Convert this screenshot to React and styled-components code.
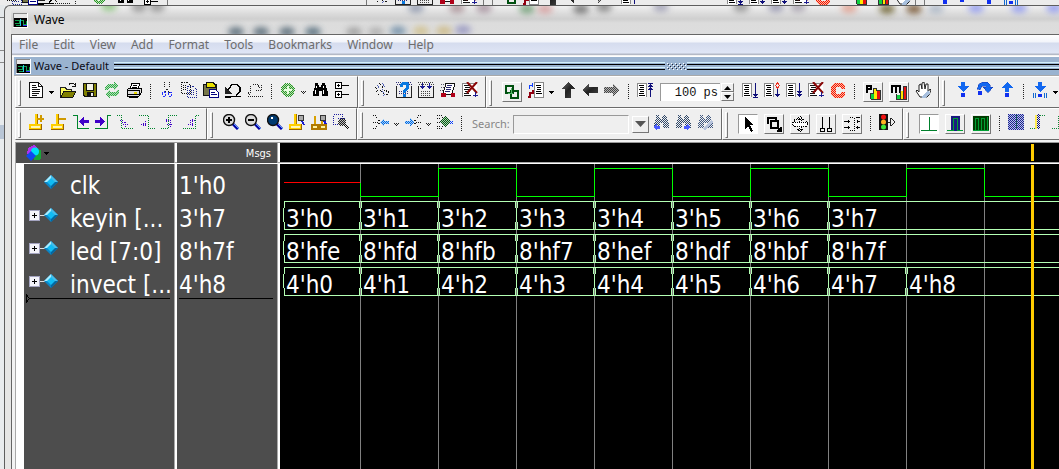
import React from "react";
import styled, { createGlobalStyle, css } from "styled-components";

const ui = `"Noto Sans", "Open Sans", sans-serif`;
const tahoma = `"DejaVu Sans Condensed", "DejaVu Sans", sans-serif`;

const Global = createGlobalStyle`
  * { box-sizing: border-box; }
  body { margin: 0; background: #e9ecee; font-family: ${ui}; }
  button, input { font: inherit; border: 0; padding: 0; margin: 0; background: none; border-radius: 0; }
`;

/* ---------- frame ---------- */
const Desktop = styled.div`
  display: flex;
  flex-direction: column;
  min-height: 100vh;
  overflow: hidden;
`;
const BackStrip = styled.div`
  display: flex;
  align-items: flex-end;
  height: 5px;
  overflow: hidden;
  background: #ececec;
  padding-left: 6px;
`;
const BackGroup = styled.div`
  display: flex;
  flex: none;
  align-items: flex-end;
  height: 32px;
  padding: 0 4px;
  border-right: 1px solid #777;
  border-left: 1px solid #777;
  margin-left: ${(p) => p.$gap || 0}px;
`;
const BackGap = styled.span`
  flex: none;
  width: 10px;
`;
const BackBlank = styled.span`
  flex: none;
  width: ${(p) => (p.$small ? 80 : 190)}px;
`;
const BackTools = styled.div`
  display: flex;
  flex: none;
  gap: 6px;
  padding-left: ${(p) => p.$pad}px;
`;
const BackRow = styled.div`
  display: flex;
  flex: 1;
`;
const Gutter = styled.div`
  flex: none;
  width: 4px;
  background: linear-gradient(#e4e8ea 0 12px, #777 12px 13px, #e8ebed 13px 45px, #8a8a8a 45px 46px, #e8ebed 46px 57px, #8a8a8a 57px 58px, #e8ebed 58px 120px, #b9c6d6 120px 134px, #e9ecee 134px);
`;
const Window = styled.main`
  display: flex;
  flex-direction: column;
  flex: 1;
  min-width: 0;
  padding-left: 6px;
  background: #e6e6e5;
  border: 1px solid #5e5e5e;
  border-width: 1px 0 0 1px;
  border-top-left-radius: 6px;
`;
const TitleBar = styled.header`
  position: relative;
  display: flex;
  align-items: center;
  gap: 6px;
  height: 28px;
  padding: 1px 0 0 2px;
  overflow: hidden;
  background: linear-gradient(#f0f0f0, #dadada 8px, #cfcfcf 13px, #dcdcdc 17px, #dddddd);
`;
const Reflections = styled.svg`
  position: absolute;
  left: 0;
  top: 0;
  width: 100%;
  height: 28px;
`;
const Title = styled.h1`
  position: relative;
  margin: 0;
  padding-bottom: 1px;
  font-size: 12px;
  line-height: 16px;
  font-weight: 400;
  color: #000;
`;
const Client = styled.div`
  display: flex;
  flex-direction: column;
  flex: 1;
  border: 1px solid #666;
  border-width: 1px 0 0 1px;
  background: #f3f3f3;
`;
const MenuBar = styled.nav`
  display: flex;
  gap: 15px;
  height: 20px;
  padding-left: 7px;
  background: linear-gradient(#fff, #f2f4fa 7px, #d5dcee 8px, #dfe5f5 18px, #b4b9c6 19px);
`;
const MenuItem = styled.button`
  font-size: 12px;
  line-height: 18px;
  padding-bottom: 1px;
  color: #6d6d6d;
`;
const Dock = styled.section`
  display: flex;
  flex-direction: column;
  flex: 1;
  margin-top: 1px;
  border-top: 1px solid #fff;
  padding-left: 2px;
`;
const DockBar = styled.div`
  display: flex;
  align-items: center;
  height: 19px;
  padding-left: 2px;
  background: #9ab3d0;
  border-bottom: 1px solid #a9a9a9;
`;
const DockTitle = styled.h2`
  margin: 0 5px 0 3px;
  font-family: ${ui};
  font-size: 11px;
  line-height: 16px;
  font-weight: 400;
  color: #0a0a14;
`;
const Rails = styled.span`
  flex: ${(p) => p.$grow || "1"};
  height: 8px;
  background: linear-gradient(#d4f1fb 0 1px, #9ab3d0 1px 2px, #000 2px 3px, #9ab3d0 3px 5px, #d4f1fb 5px 6px, #9ab3d0 6px 7px, #000 7px 8px);
`;

/* ---------- toolbars ---------- */
const ToolRow = styled.div`
  display: flex;
  height: 32px;
  overflow: hidden;
  padding-left: 1px;
  background: #efefef;
`;
const Band = styled.div`
  display: flex;
  align-items: center;
  flex: ${(p) => (p.$last ? "1 0 auto" : "none")};
  height: 32px;
  padding-right: ${(p) => p.$end || 4}px;
  border: 1px solid #fff;
  border-right-color: #6b6b6b;
  border-bottom-color: #6b6b6b;
`;
const Grip = styled.span`
  flex: none;
  width: 3px;
  height: 26px;
  margin: 2px ${(p) => p.$after || 7}px 0 2px;
  border: 1px solid #fff;
  border-right-color: #777;
  border-bottom-color: #777;
`;
const Tool = styled.button`
  display: flex;
  align-items: center;
  justify-content: center;
  flex: none;
  width: 22px;
  height: 22px;
  padding-bottom: 4px;
`;
const FaceTool = styled.button`
  display: flex;
  align-items: center;
  justify-content: center;
  flex: none;
  width: 20px;
  height: 20px;
  margin: 0 3px;
  border: 1px solid #fff;
  border-right-color: #777;
  border-bottom-color: #777;
  ${(p) =>
    p.$pressed &&
    css`
      background: #fff;
      border-color: #999 #fff #fff #999;
    `}
`;
const CaretBox = styled.button`
  display: flex;
  align-items: center;
  justify-content: center;
  flex: none;
  width: 10px;
  height: 20px;
`;
const Divider = styled.span`
  flex: none;
  width: 11px;
  height: 16px;
  background: repeating-linear-gradient(#222 0 1px, transparent 1px 2px) 5px 0 / 1px 100% no-repeat;
`;
const StepField = styled.input`
  flex: none;
  width: 60px;
  height: 18px;
  margin-left: 4px;
  padding-right: 2px;
  background: #fff;
  border: 1px solid #999;
  border-width: 1px 0 0 1px;
  font-family: "Liberation Mono", monospace;
  font-size: 12px;
  text-align: right;
  color: #111;
`;
const Spinner = styled.span`
  display: flex;
  flex-direction: column;
  flex: none;
  width: 13px;
  margin: 0 5px 0 1px;
`;
const SpinButton = styled.button`
  display: flex;
  align-items: center;
  justify-content: center;
  height: 9px;
  border: 1px solid #fff;
  border-right-color: #777;
  border-bottom-color: #777;
`;
const SearchLabel = styled.label`
  flex: none;
  width: 41px;
  margin-left: 5px;
  font-size: 11px;
  line-height: 16px;
  color: #868686;
`;
const SearchField = styled.input`
  flex: none;
  width: 116px;
  height: 19px;
  border: 1px solid #999;
  border-right-color: #fff;
  border-bottom-color: #fff;
`;
const SearchDrop = styled.button`
  display: flex;
  align-items: center;
  justify-content: center;
  flex: none;
  width: 17px;
  height: 17px;
  margin: 0 1px 0 3px;
  border: 1px solid #fff;
  border-right-color: #777;
  border-bottom-color: #777;
`;

/* ---------- wave viewer ---------- */
const Viewer = styled.div`
  display: flex;
  flex-direction: column;
  flex: 1;
  margin-left: 1px;
  border-left: 1px solid #a9a9a9;
  border-top: 1px solid #999;
  margin-top: 2px;
  background: #fff;
`;
const HeadRow = styled.div`
  display: grid;
  grid-template-columns: 158px 100px 1fr;
  column-gap: 3px;
  height: 20px;
  border-bottom: 1px solid #a9a9a9;
  background: linear-gradient(90deg, #a9a9a9 1px, #fff 1px) 158px 0 / 103px 100%;
`;
const HeadCell = styled.div`
  display: flex;
  align-items: center;
  padding: 0 6px 0 10px;
  justify-content: ${(p) => (p.$right ? "flex-end" : "flex-start")};
  background: #4d4d4d;
  color: #fff;
  font-family: ${tahoma};
  font-size: 11px;
`;
const WaveHead = styled.svg`
  display: block;
  width: 100%;
  height: 19px;
  background: #000;
`;
const Body = styled.div`
  display: grid;
  grid-template-columns: 150px 100px 1fr;
  column-gap: 3px;
  flex: 1;
  margin-top: 1px;
  padding-left: 8px;
  background: linear-gradient(90deg, #a9a9a9 1px, #fff 1px) 158px 0 / 103px 100%;
`;
const Column = styled.div`
  overflow: hidden;
  padding-top: 2px;
  background: #4d4d4d;
  color: #fff;
`;
const Signal = styled.div`
  display: flex;
  align-items: center;
  height: 33px;
  padding-left: ${(p) => (p.$value ? 2 : 5)}px;
`;
const SignalText = styled.span`
  padding-top: 8px;
  font-family: ${tahoma};
  font-size: 24px;
  line-height: 27px;
  white-space: nowrap;
`;
const Marks = styled.svg`
  flex: none;
  width: 32px;
  height: 17px;
  margin-right: 9px;
`;
const EndRule = styled.div`
  height: 1px;
  margin: 0 4px 0 2px;
  background: #000;
`;
const EndMark = styled.svg`
  display: block;
  width: 100%;
  height: 9px;
  margin-top: -4px;
  padding: 0 4px 0 2px;
  fill: none;
  shape-rendering: crispEdges;
`;
const Plot = styled.svg`
  display: block;
  width: 100%;
  height: 100%;
  background: #000;
  font-family: ${tahoma};
  font-size: 24px;
`;

/* ---------- icons, on a 16 unit grid ---------- */
const Svg = styled.svg`
  display: block;
  flex: none;
  width: 16px;
  height: 16px;
  fill: none;
  shape-rendering: crispEdges;
`;
const Art = ({ children }) => <Svg viewBox="0 0 16 16" aria-hidden="true">{children}</Svg>;
const Caret = ({ faint, label = "Menu" }) => (
  <CaretBox aria-label={label}>
    <svg width="6" height="4" viewBox="0 0 6 4" shapeRendering="crispEdges" aria-hidden="true">
      {faint ? (
        <path d="M0 1h1v1H0zM2 1h1v1H2zM4 1h1v1H4zM1 2h1v1H1zM3 2h1v1H3zM2 3h1v1H2z" fill="#222" />
      ) : (
        <path d="M0 1h5v1H4v1H3v1H2V3H1V2H0z" fill="#000" />
      )}
    </svg>
  </CaretBox>
);

const Page = ({ x = 1 }) => (
  <>
    <path d={`M${x} 1h10v14H${x}z`} fill="#fff" />
    <path d={`M${x + 0.5} 15V1.5h9V15`} stroke="#8c8c8c" />
    <path d={`M${x + 2} 3.5h5M${x + 3} 5.5h4M${x + 2} 7.5h5M${x + 3} 9.5h4M${x + 2} 11.5h5M${x + 2} 13.5h6`} stroke="#000" />
  </>
);
const Glass = ({ mark, fill = "#dcdcdc" }) => (
  <>
    <path d="M10 10l5 5" stroke="#0000a8" strokeWidth="3" shapeRendering="auto" />
    <path d="M11 10l5 5" stroke="#5ea0ff" strokeWidth="1" shapeRendering="auto" />
    <circle cx="6" cy="6" r="5.500" fill={fill} stroke="#111" strokeWidth="1.4" shapeRendering="auto" />
    {mark && <path d={mark} stroke="#000" strokeWidth="2" />}
  </>
);
const Post = ({ x = 6 }) => (
  <>
    <path d={`M${x} 0h3v11h-3z`} fill="#a87400" />
    <path d={`M${x} 0h2v11h-2z`} fill="#ffcf00" />
    <path d="M0 10h13v6H0z" fill="#9a6500" />
    <path d="M0 10h12v5H0z" fill="#ffcf00" />
    <path d="M2 12h9v2H2z" fill="#fff7b8" />
  </>
);
const Binoculars = ({ fill = "#000" }) => (
  <path d="M3 1h3v2h1v2h2V3h1V1h3v2h1v3h1v3h1v5h-6V9H7v5H1V9h1V6h1z" fill={fill} />
);

const loop = "M1 8V5l3-3h6V0l5 4-5 4V6H5L3 8zM15 8v3l-3 3H6v2l-5-4 5-4v2h5l2-2z";
const cee = "M4 1h8l3 3v3h-4V5H6v7h5v-2h4v3l-3 3H4l-3-3V4z";

const icons = {
  doc: (
    <>
      <path d="M1.500.5h9l4 4v11h-13z" fill="#fff" stroke="#111" />
      <path d="M10.500.5v4h4M4 3.500h4M4 5.500h5M4 7.500h8M4 9.500h8M4 11.500h7M4 13.500h5" stroke="#111" />
    </>
  ),
  open: (
    <>
      <path d="M.5 5.500h5l1 2h5v3L5 14.500H.5z" fill="#ffff60" stroke="#222" />
      <path d="M4 9h12l-3 6H1z" fill="#808000" stroke="#111" />
      <path d="M9 3l1-2h3l2 2M15.500 1v4M12 4.500h4" stroke="#111" />
    </>
  ),
  save: (
    <>
      <path d="M1 1h14v14H2l-1-1z" fill="#111" />
      <path d="M2 2h2v7h8V2h2v12H3l-1-1z" fill="#808000" />
      <path d="M5 2h6v6H5z" fill="#f4f4e8" />
      <path d="M5 10h7v4H5z" fill="#111" />
      <path d="M9 11h2v3H9z" fill="#eee" />
    </>
  ),
  refresh: (
    <>
      <path d={loop} fill="#b4e0b8" />
      <path d={loop} fill="#30a848" mask="url(#checker)" />
    </>
  ),
  print: (
    <>
      <path d="M4 7l2-6h8l-2 6z" fill="#fff" stroke="#000" />
      <path d="M7 3.500h4M6 5.500h5" stroke="#000" />
      <path d="M1 8l2-2h12v5l-2 3H1z" fill="#ddd" stroke="#000" />
      <path d="M1 8.500h12M2 12.500h11M13.500 8v5" stroke="#000" />
      <path d="M8 10h3v2H8z" fill="#e8d800" />
      <path d="M3 15.500h9" stroke="#000" />
    </>
  ),
  cut: (
    <>
      <path d="M5.500 0v4l5 7M10.500 0v4l-5 7" stroke="#222" strokeDasharray="1 1" />
      <path d="M3.500 11v3h3v-3l-1-1zM9.500 11v3h3v-3l-2-1z" stroke="#2430ff" strokeDasharray="2 1" />
    </>
  ),
  copy: (
    <>
      <path d="M.5.5h6l3 3v8h-9zM2 3.500h4M2 5.500h4M2 7.500h4" stroke="#111" strokeDasharray="1 1" />
      <path d="M6.500 4.500h6l3 3v8h-9zM8 8.500h5M8 10.500h5M8 12.500h5" stroke="#1c2690" strokeDasharray="1 1" />
    </>
  ),
  paste: (
    <>
      <path d="M.5 2.500h13v11H.5z" fill="#777748" stroke="#111" />
      <path d="M4 0h6l2 3v2H3V3z" fill="#e8e000" stroke="#111" />
      <path d="M6.500 7.500h6l3 3v5h-9z" fill="#fff" stroke="#000080" />
      <path d="M8 10.500h4M8 12.500h6" stroke="#000080" />
    </>
  ),
  undo: (
    <>
      <path d="M0 5v7h7z" fill="#222" />
      <path d="M3 8l4-5.500h5l3 3v4l-4 4" stroke="#000" strokeWidth="1.500" />
      <path d="M0 14h6v2H0z" fill="#000" />
      <path d="M6 14.500h10" stroke="#000" />
    </>
  ),
  redo: <path d="M3 11V6l3-4h4l4 5M14.500 3v6M9 8.500h6M3 13l-2-3M1 14.500h15" stroke="#222" strokeDasharray="1 1" />,
  add: (
    <>
      <circle cx="8" cy="8" r="6.500" fill="#b9dfb0" />
      <circle cx="8" cy="8" r="7" fill="#289628" mask="url(#checker)" />
      <path d="M8 4v8M4 8h8" stroke="#e8ffe0" strokeWidth="2" />
    </>
  ),
  find: (
    <>
      <Binoculars />
      <path d="M4.500 4v2M11.500 4v2M3.500 8v4M11.500 8v4" stroke="#fff" />
    </>
  ),
  tree: (
    <>
      <path d="M1.500.5h6v6h-6zM1.500 9.500h6v6h-6z" fill="#fff" stroke="#000" />
      <path d="M3 3.500h3M4.500 2v3M3 12.500h3M4.500 11v3M8 3.500h7M8 12.500h7" stroke="#000" />
    </>
  ),
  compile: (
    <>
      <path d="M1 5l3 3-2 2 3 4M5 1l4 4-3 3 4 4M10 8l5 2-4 5" stroke="#111" strokeDasharray="1 1" />
      <path d="M8 1l3 4-3 3 3 4-3 3M3 3l2 3" stroke="#5364b8" strokeDasharray="1 1" />
    </>
  ),
  helpBoard: (
    <>
      <path d="M0 .5h16M1 2.500h15M3 9.500h10M3 11.500h10" stroke="#30307a" strokeDasharray="1 1" />
      <path d="M.5 4v11h15V4" stroke="#222" />
      <path d="M4 5V2l2-2h5l2 2v4l-3 3v2H7V8l3-3V3H7v2zM7 12h3v3H7z" fill="#0878e0" />
    </>
  ),
  downBoard: (
    <>
      <path d="M0 .5h16M1 2.500h15M3 9.500h10M3 11.500h10M3 13.500h10" stroke="#444" strokeDasharray="1 1" />
      <path d="M.5 4v11h15V4" stroke="#222" />
      <path d="M4.500 1v6M2 4.500h5M3 5.500h3M11.500 1v6M9 4.500h5M10 5.500h3" stroke="#181890" />
    </>
  ),
  cart: (
    <>
      <path d="M6 1h9l-3 11H3z" fill="#fff" stroke="#111" />
      <path d="M7 3.500h5M6 5.500h5M6 7.500h5M5 9.500h5" stroke="#26266e" />
      <path d="M1 12.500h14" stroke="#111" />
      <circle cx="3.500" cy="13" r="2.500" fill="#b00018" />
      <circle cx="13" cy="13" r="2.500" fill="#b00018" />
      <path d="M1 2h4M1 5h3M0 8h3" stroke="#556" strokeDasharray="1 1" />
    </>
  ),
  stopPage: (
    <>
      <path d="M0 1h15v13H0z" fill="#fff" />
      <path d="M.5 15V1.500H15" stroke="#888" />
      <path d="M2 3.500h6M3 5.500h5M2 7.500h6M3 9.500h5M2 11.500h5M2 13.500h7" stroke="#111" />
      <path d="M5 0l10 11M15 0L5 11" stroke="#8a0808" strokeWidth="2" shapeRendering="auto" />
      <path d="M13.500 10v5M11 13h5" stroke="#1c1c90" />
    </>
  ),
  env: (
    <>
      <path d="M2 2h7v7H2z" stroke="#005010" strokeWidth="2" />
      <path d="M7 7h7v7H7z" stroke="#005010" strokeWidth="2" />
      <path d="M4 9h5M7 4v5" stroke="#52b864" />
    </>
  ),
  restart: (
    <>
      <path d="M6.500 15V.5h9V15z" fill="#fff" stroke="#888" />
      <path d="M8 3.500h5M9 5.500h4M9 7.500h4M8 9.500h5M8 11.500h6" stroke="#000" />
      <path d="M1.500 7V3h3M4.500 1v4" stroke="#1040ff" />
      <path d="M0 15h2v-4h3V8" stroke="#900010" strokeWidth="2" />
    </>
  ),
  up: <path d="M8 0l7 7h-4v9H5V7H1z" fill="url(#steel)" />,
  left: <path d="M0 8l7-6v3h9v6H7v3z" fill="url(#steel)" />,
  right: (
    <>
      <path d="M16 8L9 2v3H0v6h9v3z" fill="#b4b4b4" />
      <path d="M16 8L9 2v3H0v6h9v3z" fill="#444" mask="url(#checker)" />
    </>
  ),
  runTop: (
    <>
      <Page x={0} />
      <path d="M13.500 1v14M11 1.500h5M11 4.500h5M12 3.500h3M11 7.500h5M12 6.500h3" stroke="#10107a" />
    </>
  ),
  runLine: (
    <>
      <Page x={0} />
      <path d="M13.500 1v14M11 12.500h5M12 13.500h3M11 15.500h5" stroke="#10107a" />
    </>
  ),
  runCont: (
    <>
      <Page x={0} />
      <path d="M13.500 6v9M11 12.500h5M12 13.500h3" stroke="#10107a" />
      <path d="M13.500 1l2 2.500-2 2.500-2-2.500z" stroke="#f03020" />
    </>
  ),
  runAll: (
    <>
      <Page x={0} />
      <path d="M13.500 1v14M11 9.500h5M12 10.500h3M11 12.500h5M12 13.500h3" stroke="#10107a" />
    </>
  ),
  stopC: (
    <>
      <path d={cee} fill="#ffb8a8" />
      <path d={cee} fill="#f01800" mask="url(#checker)" />
    </>
  ),
  profP: (
    <>
      <path d="M2 9V2h4v3H2" stroke="#000" strokeWidth="2" />
      <path d="M6 10h3v5H6z" fill="#10d040" />
      <path d="M9 5h3v10H9z" fill="#ffe800" />
      <path d="M12 7h4v8h-4z" fill="#e81010" />
      <path d="M5.500 15V9.500h3V4.500h3V6.500h4v9h-10" stroke="#333" />
    </>
  ),
  profM: (
    <>
      <path d="M1 9V2h8v7M5 9V2" stroke="#000" strokeWidth="2" />
      <path d="M6 11h3v4H6z" fill="#10d040" />
      <path d="M9 7h3v8H9z" fill="#ffe800" />
      <path d="M12 3h4v12h-4z" fill="#e81010" />
      <path d="M5.500 10v5.500h10V2.500h-3.500v13M9.500 6v9" stroke="#333" />
    </>
  ),
  hand: (
    <>
      <path d="M5 15L1 9l1-1 2 2V3l2-1 1 5V1l2-1 1 7 1-5h2v8l2-3 1 1-2 5-2 2z" fill="#fff" stroke="#222" shapeRendering="auto" />
      <path d="M6 15l7-6 2 2-4 5H7z" fill="#a8c0de" />
    </>
  ),
  stepInto: (
    <>
      <path d="M6 0h4v4h4L8 10 2 4h4z" fill="#1268f0" />
      <circle cx="8" cy="13" r="2.500" fill="#1030f0" />
    </>
  ),
  stepOver: (
    <>
      <path d="M0 7l2-5 4-2h4l3 3v2h3l-5 6-5-6h3L8 4H5L3 8z" fill="#1268f0" stroke="#1030b0" strokeWidth=".5" />
      <circle cx="3" cy="11" r="2.500" fill="#1030f0" />
    </>
  ),
  stepOut: (
    <>
      <path d="M8 0l6 6h-4v4H6V6H2z" fill="#1268f0" />
      <circle cx="8" cy="13" r="2.500" fill="#1030f0" />
    </>
  ),
  stepCur: (
    <>
      <path d="M6 0h4v4h4L8 10 2 4h4z" fill="#1268f0" />
      <path d="M1.500 11v5M3.500 11v5M12.500 11v5M14.500 11v5" stroke="#1268d0" />
      <circle cx="8" cy="13.500" r="2" fill="#1030f0" />
    </>
  ),
  curAdd: (
    <>
      <Post />
      <path d="M8 5h7M12 1v7" stroke="#d09a00" strokeWidth="2" />
    </>
  ),
  curDel: (
    <>
      <Post x={5} />
      <path d="M8 5h7" stroke="#d09a00" strokeWidth="2" />
    </>
  ),
  edgeL: (
    <>
      <path d="M-1 1.500h5v13h12" stroke="#00842c" />
      <path d="M6 7.500l5-4.500v3h5v3h-5v3z" fill="#4000c8" />
    </>
  ),
  edgeR: (
    <>
      <path d="M16 1.500h-4v13H0" stroke="#00842c" />
      <path d="M10 7.500L5 3v3H0v3h5v3z" fill="#4000c8" />
    </>
  ),
  fallA: (
    <>
      <path d="M0 1.500h4.500v13H16" stroke="#00842c" strokeDasharray="1 1" />
      <path d="M3 6.500h3M5 8.500h4M6 10.500h6M8.500 8v5" stroke="#4000c8" strokeDasharray="1 1" />
    </>
  ),
  fallB: (
    <>
      <path d="M0 1.500h9.500v13H16" stroke="#00842c" strokeDasharray="1 1" />
      <path d="M2 10.500h6M4 9.500h3M4 11.500h3M6.500 7v6" stroke="#4000c8" strokeDasharray="1 1" />
    </>
  ),
  riseA: (
    <>
      <path d="M16 1.500H7.500v13H0" stroke="#00842c" strokeDasharray="1 1" />
      <path d="M5 6.500h5M6 10.500h6M5.500 5v4M9.500 8v5" stroke="#4000c8" strokeDasharray="1 1" />
    </>
  ),
  riseB: (
    <>
      <path d="M16 1.500h-3.500v13H0" stroke="#00842c" strokeDasharray="1 1" />
      <path d="M5 10.500h5M7 6.500h5M9.500 5v7M7.500 8v4" stroke="#4000c8" strokeDasharray="1 1" />
    </>
  ),
  zoomIn: <Glass mark="M3 6h6M6 3v6" />,
  zoomOut: <Glass mark="M3 6h6" />,
  zoomFull: (
    <>
      <Glass fill="#003a70" />
      <path d="M4 4h2" stroke="#fff" strokeWidth="2" />
    </>
  ),
  zoomCur: (
    <>
      <Post x={5} />
      <circle cx="12" cy="4" r="3" fill="#aaa" stroke="#333" />
      <path d="M13 7l2 4" stroke="#1818d0" strokeWidth="2" />
    </>
  ),
  zoomTwo: (
    <>
      <path d="M4 2v9M11 5v6" stroke="#d8a000" strokeWidth="2" />
      <path d="M1 11h6v4H1zM9 11h6v4H9z" fill="#fff3a0" stroke="#b07800" strokeWidth="2" />
      <circle cx="12" cy="4" r="3" fill="#aaa" stroke="#333" />
      <path d="M13 7l2 3" stroke="#1818d0" strokeWidth="2" />
    </>
  ),
  zoomRange: (
    <>
      <path d="M.5.5h9v10h-9zM4.500 4.500h7v7" stroke="#1c1ca0" strokeDasharray="1 1" />
      <circle cx="9" cy="8" r="3.500" fill="#bbb" />
      <g mask="url(#checker)">
        <circle cx="9" cy="8" r="4" fill="#222" />
        <path d="M11 10l5 5" stroke="#111" strokeWidth="3" />
      </g>
    </>
  ),
  foldL: (
    <>
      <path d="M0 1.500h2l4 5h2M0 14.500h2l4-5h2M0 8.500h5" stroke="#111" strokeDasharray="1 1" />
      <path d="M7 8l4-4v3h5v3h-5v3z" fill="#a8d0f8" />
      <path d="M7 8l4-4v3h5v3h-5v3z" fill="#0068e0" mask="url(#checker)" />
    </>
  ),
  foldR: (
    <>
      <path d="M16 1.500h-2l-4 5H8M16 14.500h-2l-4-5H8M11 8.500h5" stroke="#111" strokeDasharray="1 1" />
      <path d="M9 8L5 4v3H0v3h5v3z" fill="#a8d0f8" />
      <path d="M9 8L5 4v3H0v3h5v3z" fill="#0068e0" mask="url(#checker)" />
    </>
  ),
  foldAll: (
    <>
      <path d="M0 1.500h4l3 4M0 14.500h4l3-4M0 4.500h4M0 12.500h4M0 8.500h4" stroke="#111" strokeDasharray="1 1" />
      <path d="M8 3l5 5-5 5-5-5z" fill="#a8e0a8" />
      <g mask="url(#checker)">
        <path d="M8 2l6 6-6 6-6-6z" fill="#0a4a1a" />
        <path d="M13 7h3v3h-3z" fill="#0038ff" />
      </g>
    </>
  ),
  findPrev: (
    <>
      <g mask="url(#checker)">
        <Binoculars fill="#304868" />
      </g>
      <path d="M0 13l4-3v2h3v3H4v1z" fill="#4a5cff" />
    </>
  ),
  findNext: (
    <>
      <g mask="url(#checker)">
        <Binoculars fill="#304868" />
      </g>
      <path d="M16 13l-4-3v2H9v3h3v1z" fill="#4a5cff" />
    </>
  ),
  findOpt: (
    <>
      <g mask="url(#checker)">
        <Binoculars fill="#405880" />
      </g>
      <path d="M5 15l9-9 2 2-8 8z" fill="#b8c4dc" />
    </>
  ),
  pointer: <path d="M5 1v12l3-3 3 6 2-1-3-6h4z" fill="#000" />,
  zoomMode: <path d="M2 8V2h8v2M5 12V5h7v7zM11 11l4 4M15 11v4h-4" stroke="#000" strokeWidth="2" />,
  pan: (
    <>
      <path d="M7 2h2v4h5V5l2 3-2 3v-1H9v4H7v-4H2v1L0 8l2-3v1h5zM5 3l3-3 3 3zM5 13l3 3 3-3z" fill="#fff" stroke="#000" strokeDasharray="1 1" />
    </>
  ),
  cursors: <path d="M4.500 1v11M11.500 1v11M2.500 12.500h4v3h-4zM9.500 12.500h4v3h-4z" stroke="#000" />,
  editMode: (
    <>
      <path d="M6 1.500h4v13H6M10.500 2v12" stroke="#000" strokeDasharray="1 1" />
      <path d="M0 5.500h6M4.500 4v3M0 11.500h6M4.500 10v3M15.500 1h-4M12 11.500h4M12.500 5.500h4M13.500 4v3M13.500 10v3" stroke="#000" />
    </>
  ),
  traffic: (
    <>
      <path d="M0 0h9v16H0z" fill="#111" />
      <circle cx="4.500" cy="3" r="2.500" fill="#f01010" shapeRendering="auto" />
      <circle cx="4.500" cy="8" r="2.500" fill="#ffb020" shapeRendering="auto" />
      <circle cx="4.500" cy="13" r="2.500" fill="#40e838" shapeRendering="auto" />
      <path d="M11.500 4.500h1l3 3v1l-3 3h-1zM9 8h2" stroke="#222" />
    </>
  ),
  waveA: <path d="M0 14.500h16M8.500 1v13" stroke="#00802c" />,
  waveB: (
    <>
      <path d="M4 0h9v15H4z" fill="#1a1a80" />
      <path d="M0 14.500h6.500V2.500h4v12H16" stroke="#00a034" />
    </>
  ),
  waveC: (
    <>
      <path d="M0 0h16v15H0z" fill="#003c00" />
      <path d="M0 14.500h2.500V2.500h3v12h3V2.500h3v12h3V1M0 14.500h16" stroke="#00a034" />
    </>
  ),
  ditherA: (
    <>
      <path d="M0 0h16v16H0z" fill="#b4c4f0" />
      <path d="M0 0h16v16H0z" fill="#202088" mask="url(#checker)" />
      <path d="M8.500 1v14" stroke="#108838" strokeDasharray="1 1" />
    </>
  ),
  ditherB: (
    <>
      <path d="M5 1h2v14H5z" fill="#ffec50" />
      <path d="M7 0h3v15H7z" fill="#101080" mask="url(#checker)" />
      <path d="M0 14.500h6M10 1.500h6" stroke="#108838" strokeDasharray="1 1" />
    </>
  ),
  ditherC: <path d="M0 14.500h6v-13h8" stroke="#108838" strokeDasharray="1 1" />,
};

const Btn = ({ n }) => (
  <Tool aria-label={n}>
    <Art>{icons[n]}</Art>
  </Tool>
);
const Face = ({ n, on }) => (
  <FaceTool $pressed={on} aria-label={n} aria-pressed={!!on}>
    <Art>{icons[n]}</Art>
  </FaceTool>
);
const Btns = ({ list }) => list.split(" ").map((n) => <Btn key={n} n={n} />);
const Faces = ({ list }) => list.split(" ").map((n) => <Face key={n} n={n} />);
const BackIcons = ({ pad, list }) => (
  <BackTools $pad={pad}>
    {list.split(" ").map((n) => <Art key={n}>{icons[n]}</Art>)}
  </BackTools>
);

const DefsSvg = styled.svg`
  position: absolute;
  width: 0;
  height: 0;
`;
const Defs = () => (
  <DefsSvg aria-hidden="true">
    <defs>
      <pattern id="checks" width="2" height="2" patternUnits="userSpaceOnUse">
        <path d="M0 0h1v1H0zM1 1h1v1H1z" fill="#fff" shapeRendering="crispEdges" />
      </pattern>
      <mask id="checker" maskUnits="userSpaceOnUse" x="0" y="0" width="16" height="16">
        <path d="M0 0h16v16H0z" fill="url(#checks)" />
      </mask>
      <linearGradient id="steel" x1="0" x2="1" y2="1">
        <stop offset="0" stopColor="#777" />
        <stop offset=".5" stopColor="#222" />
        <stop offset="1" stopColor="#444" />
      </linearGradient>
    </defs>
  </DefsSvg>
);

const AppIcon = styled(Svg)`
  position: relative;
  width: 15px;
  height: 15px;
`;
const WaveIcon = () => (
  <AppIcon viewBox="0 0 15 15" aria-hidden="true">
    <path d="M0 0h15v15H0z" fill="#000" />
    <path d="M1 1h13v4H1z" fill="#e8e8e8" />
    <path d="M.5 0v15M0 .5h14" stroke="#888" />
    <path d="M14.500 0v15M0 14.500h15" stroke="#fff" />
    <path d="M2 7.500h4v3H2M3 12.500h4M8 7.500h2v4h3v-4" stroke="#10a050" />
    <path d="M7.500 6v7" stroke="#20c8e8" />
    <path d="M10 12h4v1h-4z" fill="#3030ff" />
  </AppIcon>
);

const blobs = [
  [225, 26, "#4c6070"], [250, 26, "#4c6070"], [276, 26, "#4c6070"], [302, 26, "#4a6474"],
  [343, 26, "#999"], [365, 26, "#aaa"], [387, 25, "#6a8aa6"], [410, 25, "#d0bf88"], [433, 25, "#ccb880"], [452, 24, "#9292c0"],
  [405, 2, "#8892a8"], [446, 2, "#a48a90"], [473, 2, "#a08a98"], [516, 3, "#6a9a70"], [534, 3, "#d49a9a"],
  [570, 3, "#666"], [593, 1, "#777"], [650, 1, "#9a9ab0"], [730, 1, "#888"], [765, 1, "#8c8ca8"], [787, 1, "#a09aa8"],
  [838, 2, "#e09a88"], [876, 3, "#685c28"], [903, 3, "#704c28"], [925, 3, "#a8b4c4"], [965, 2, "#8a94f0"], [1008, 2, "#8a94f0"], [1043, 2, "#8a94f0"],
  [98, 0, "#7fc070"], [128, 1, "#888"], [146, 1, "#888"],
];

/* ---------- waveform data ---------- */
const EDGE = 80;
const STEP = 78;
const edges = Array.from({ length: 9 }, (_, i) => EDGE + i * STEP);
const hex = (prefix, items) => items.map((v) => prefix + v);
const buses = [
  { top: 37, values: hex("3'h", [0, 1, 2, 3, 4, 5, 6, 7]) },
  { top: 70, values: hex("8'h", ["fe", "fd", "fb", "f7", "ef", "df", "bf", "7f"]) },
  { top: 103, values: hex("4'h", [0, 1, 2, 3, 4, 5, 6, 7, 8]) },
];
const clock = edges.reduce((d, x, i) => `${d}H${x + 0.5}V${i % 2 ? 4.5 : 32.5}`, "M80.5 18.5");

const Bus = ({ top, values }) => (
  <g>
    <path d={`M4.5 ${top + 7}v-7M4.5 ${top + 21}v8M3.5 ${top + 7}v14`} stroke="#b4ffb4" />
    <line x1="4" x2="100%" y1={top + 0.5} y2={top + 0.5} stroke="#b4ffb4" />
    <line x1="4" x2="100%" y1={top + 28.5} y2={top + 28.5} stroke="#b4ffb4" />
    {values.map((v, i) => (
      <React.Fragment key={v}>
        {i > 0 && (
          <path
            d={`M${edges[i - 1] - 0.5} ${top}v7m0 14v8M${edges[i - 1] + 1.5} ${top}v7m0 14v8M${edges[i - 1] + 0.5} ${top + 7}v14`}
            stroke="#b4ffb4"
          />
        )}
        <text x={i ? edges[i - 1] + 3 : 6} y={top + 26} fill="#fff">{v}</text>
      </React.Fragment>
    ))}
  </g>
);

const signals = [
  { name: "clk", value: "1'h0" },
  { name: "keyin [...", value: "3'h7", bus: true },
  { name: "led [7:0]", value: "8'h7f", bus: true },
  { name: "invect [...", value: "4'h8", bus: true },
];

const SignalMarks = ({ bus }) => (
  <Marks viewBox="0 0 32 17" aria-hidden="true">
    {bus && (
      <g shapeRendering="crispEdges">
        <path d="M10 8.500h8" stroke="#ddd" />
        <path d="M0 3h11v11H0z" fill="#f4f4fa" />
        <path d="M.5 3.500h10v10H.5z" fill="none" stroke="#a4a4c0" />
        <path d="M3 8.500h5M5.500 6v5" stroke="#000" strokeWidth="1" />
      </g>
    )}
    <path d="M22 1l7 7-7 7-7-7z" fill="#0a86c8" />
    <path d="M22 1v4l-3 3h-4z" fill="#a8ecff" />
    <path d="M22 1l7 7h-4l-3-3z" fill="#48bce8" />
    <path d="M22 15l7-7h-4l-3 3z" fill="#0468a0" />
    <path d="M22 4l4 4-4 4-4-4z" fill="#10bcf4" />
  </Marks>
);

const menus = ["File", "Edit", "View", "Add", "Format", "Tools", "Bookmarks", "Window", "Help"];

export default function App() {
  return (
    <Desktop>
      <Global />
      <Defs />
      <BackStrip aria-hidden="true">
        <Art>{icons.copy}</Art>
        <Art>{icons.paste}</Art>
        <Art>{icons.undo}</Art>
        <Art>{icons.redo}</Art>
        <Divider />
        <BackGap />
        <Art>{icons.add}</Art>
        <BackGap />
        <Art>{icons.find}</Art>
        <BackGap />
        <Art>{icons.tree}</Art>
        <BackGroup $gap={8}><BackBlank /></BackGroup>
        <BackIcons pad={6} list="compile helpBoard downBoard cart stopPage" />
        <BackGroup $gap={6} />
        <BackIcons pad={8} list="env restart up left right" />
        <BackIcons pad={16} list="runTop" />
        <BackBlank $small />
        <BackIcons pad={10} list="runLine runCont runAll stopPage stopC" />
        <BackIcons pad={20} list="profP profM hand" />
        <BackGroup $gap={4} />
        <BackIcons pad={12} list="stepInto stepOver stepOut stepCur" />
      </BackStrip>
      <BackRow>
        <Gutter />
        <Window>
          <TitleBar>
            <Reflections aria-hidden="true">
              <filter id="soft" x="-100%" y="-100%" width="300%" height="300%">
                <feGaussianBlur stdDeviation="3" />
              </filter>
              {blobs.map(([x, y, c]) => (
                <ellipse key={`${x}-${y}`} cx={x} cy={y} rx="8" ry="5" fill={c} opacity=".8" filter="url(#soft)" />
              ))}
            </Reflections>
            <WaveIcon />
            <Title>Wave</Title>
          </TitleBar>
          <Client>
            <MenuBar>
              {menus.map((m) => <MenuItem key={m}>{m}</MenuItem>)}
            </MenuBar>
            <Dock>
              <DockBar>
                <WaveIcon />
                <DockTitle>Wave - Default</DockTitle>
                <Rails $grow="552 0 0" />
                <svg width="22" height="7" shapeRendering="crispEdges" aria-hidden="true">
                  <path d="M2 .5h18M2 4.500h18" stroke="#fff" strokeDasharray="1 3" />
                  <path d="M4 2.500h18M4 6.500h18" stroke="#fff" strokeDasharray="1 3" />
                  <path d="M3 1.500h18M3 5.500h18" stroke="#223" strokeDasharray="1 3" />
                  <path d="M5 3.500h15" stroke="#223" strokeDasharray="1 3" />
                </svg>
                <Rails $grow="372 0 0" />
              </DockBar>
              <ToolRow role="toolbar" aria-label="Standard">
                <Band>
                  <Grip $after={4} />
                  <Btn n="doc" />
                  <Caret />
                  <Btns list="open save refresh print" />
                  <Divider />
                  <Btns list="cut copy paste undo redo" />
                  <Divider />
                  <Btn n="add" />
                  <Caret faint />
                  <Btns list="find tree" />
                </Band>
                <Band>
                  <Grip />
                  <Btns list="compile helpBoard downBoard cart stopPage" />
                </Band>
                <Band>
                  <Grip />
                  <Face n="env" />
                  <Btn n="restart" />
                  <Caret />
                  <Btns list="up left right" />
                  <Divider />
                  <Btn n="runTop" />
                  <StepField aria-label="Run length" defaultValue="100 ps" />
                  <Spinner>
                    <SpinButton aria-label="Increase">
                      <svg width="7" height="4" aria-hidden="true"><path d="M0 4l3.500-4L7 4z" /></svg>
                    </SpinButton>
                    <SpinButton aria-label="Decrease">
                      <svg width="7" height="4" aria-hidden="true"><path d="M0 0l3.500 4L7 0z" /></svg>
                    </SpinButton>
                  </Spinner>
                  <Btns list="runLine runCont runAll stopPage stopC" />
                  <Divider />
                  <Faces list="profP profM" />
                  <Btn n="hand" />
                </Band>
                <Band $last>
                  <Grip />
                  <Btns list="stepInto stepOver stepOut" />
                  <Divider />
                  <Btn n="stepCur" />
                  <Caret />
                </Band>
              </ToolRow>
              <ToolRow role="toolbar" aria-label="Wave tools">
                <Band>
                  <Grip $after={5} />
                  <Btns list="curAdd curDel edgeL edgeR fallA fallB riseA riseB" />
                </Band>
                <Band>
                  <Grip />
                  <Btns list="zoomIn zoomOut zoomFull zoomCur zoomTwo zoomRange" />
                </Band>
                <Band $end={5}>
                  <Grip />
                  <Btn n="foldL" />
                  <Caret faint />
                  <Btn n="foldR" />
                  <Caret faint />
                  <Btn n="foldAll" />
                  <Divider />
                  <SearchLabel htmlFor="search">Search:</SearchLabel>
                  <SearchField id="search" />
                  <SearchDrop aria-label="Search history">
                    <svg width="11" height="6" aria-hidden="true"><path d="M0 0h11L5.500 6z" fill="#555" /></svg>
                  </SearchDrop>
                  <Btns list="findPrev findNext findOpt" />
                </Band>
                <Band>
                  <Grip />
                  <Face n="pointer" on />
                  <Faces list="zoomMode pan cursors editMode" />
                  <Divider />
                  <Btn n="traffic" />
                </Band>
                <Band $last>
                  <Grip />
                  <Face n="waveA" on />
                  <Faces list="waveB waveC" />
                  <Divider />
                  <Btns list="ditherA ditherB ditherC" />
                </Band>
              </ToolRow>
              <Viewer>
                <HeadRow>
                  <HeadCell>
                    <Art>
                      <path d="M2 3l6-3 3 3-4 6H1z" fill="#b030f0" />
                      <path d="M8 5h7v8l-2 2H8z" fill="#18a838" />
                      <circle cx="9" cy="6.500" r="4" fill="#00e0f8" shapeRendering="auto" />
                      <path d="M5 6l5 5-5 5-5-5z" fill="#1048f0" shapeRendering="auto" />
                    </Art>
                    <Caret />
                  </HeadCell>
                  <HeadCell $right>Msgs</HeadCell>
                  <WaveHead aria-hidden="true">
                    <rect x="751" y="1" width="3" height="17" fill="#ffcc00" />
                  </WaveHead>
                </HeadRow>
                <Body>
                  <Column>
                    {signals.map((s) => (
                      <Signal key={s.name}>
                        <SignalMarks bus={s.bus} />
                        <SignalText>{s.name}</SignalText>
                      </Signal>
                    ))}
                    <EndMark aria-hidden="true">
                      <line x1="3" x2="100%" y1="4.5" y2="4.5" stroke="#000" />
                      <path d="M.5 1v7l3-3.500z" stroke="#000" />
                    </EndMark>
                  </Column>
                  <Column>
                    {signals.map((s) => (
                      <Signal key={s.name} $value>
                        <SignalText>{s.value}</SignalText>
                      </Signal>
                    ))}
                    <EndRule />
                  </Column>
                  <Plot fill="none" shapeRendering="crispEdges">
                    {edges.map((x) => (
                      <line key={x} x1={x + 0.5} x2={x + 0.5} y1="0" y2="100%" stroke="#808080" />
                    ))}
                    <path d="M4 18.500h76" stroke="#f00" />
                    <path d={clock} stroke="#0f0" />
                    <line x1="704" x2="100%" y1="32.5" y2="32.5" stroke="#0f0" />
                    {buses.map((b) => <Bus key={b.top} {...b} />)}
                    <rect x="751" y="1" width="3" height="100%" fill="#ffcc00" />
                  </Plot>
                </Body>
              </Viewer>
            </Dock>
          </Client>
        </Window>
      </BackRow>
    </Desktop>
  );
}
